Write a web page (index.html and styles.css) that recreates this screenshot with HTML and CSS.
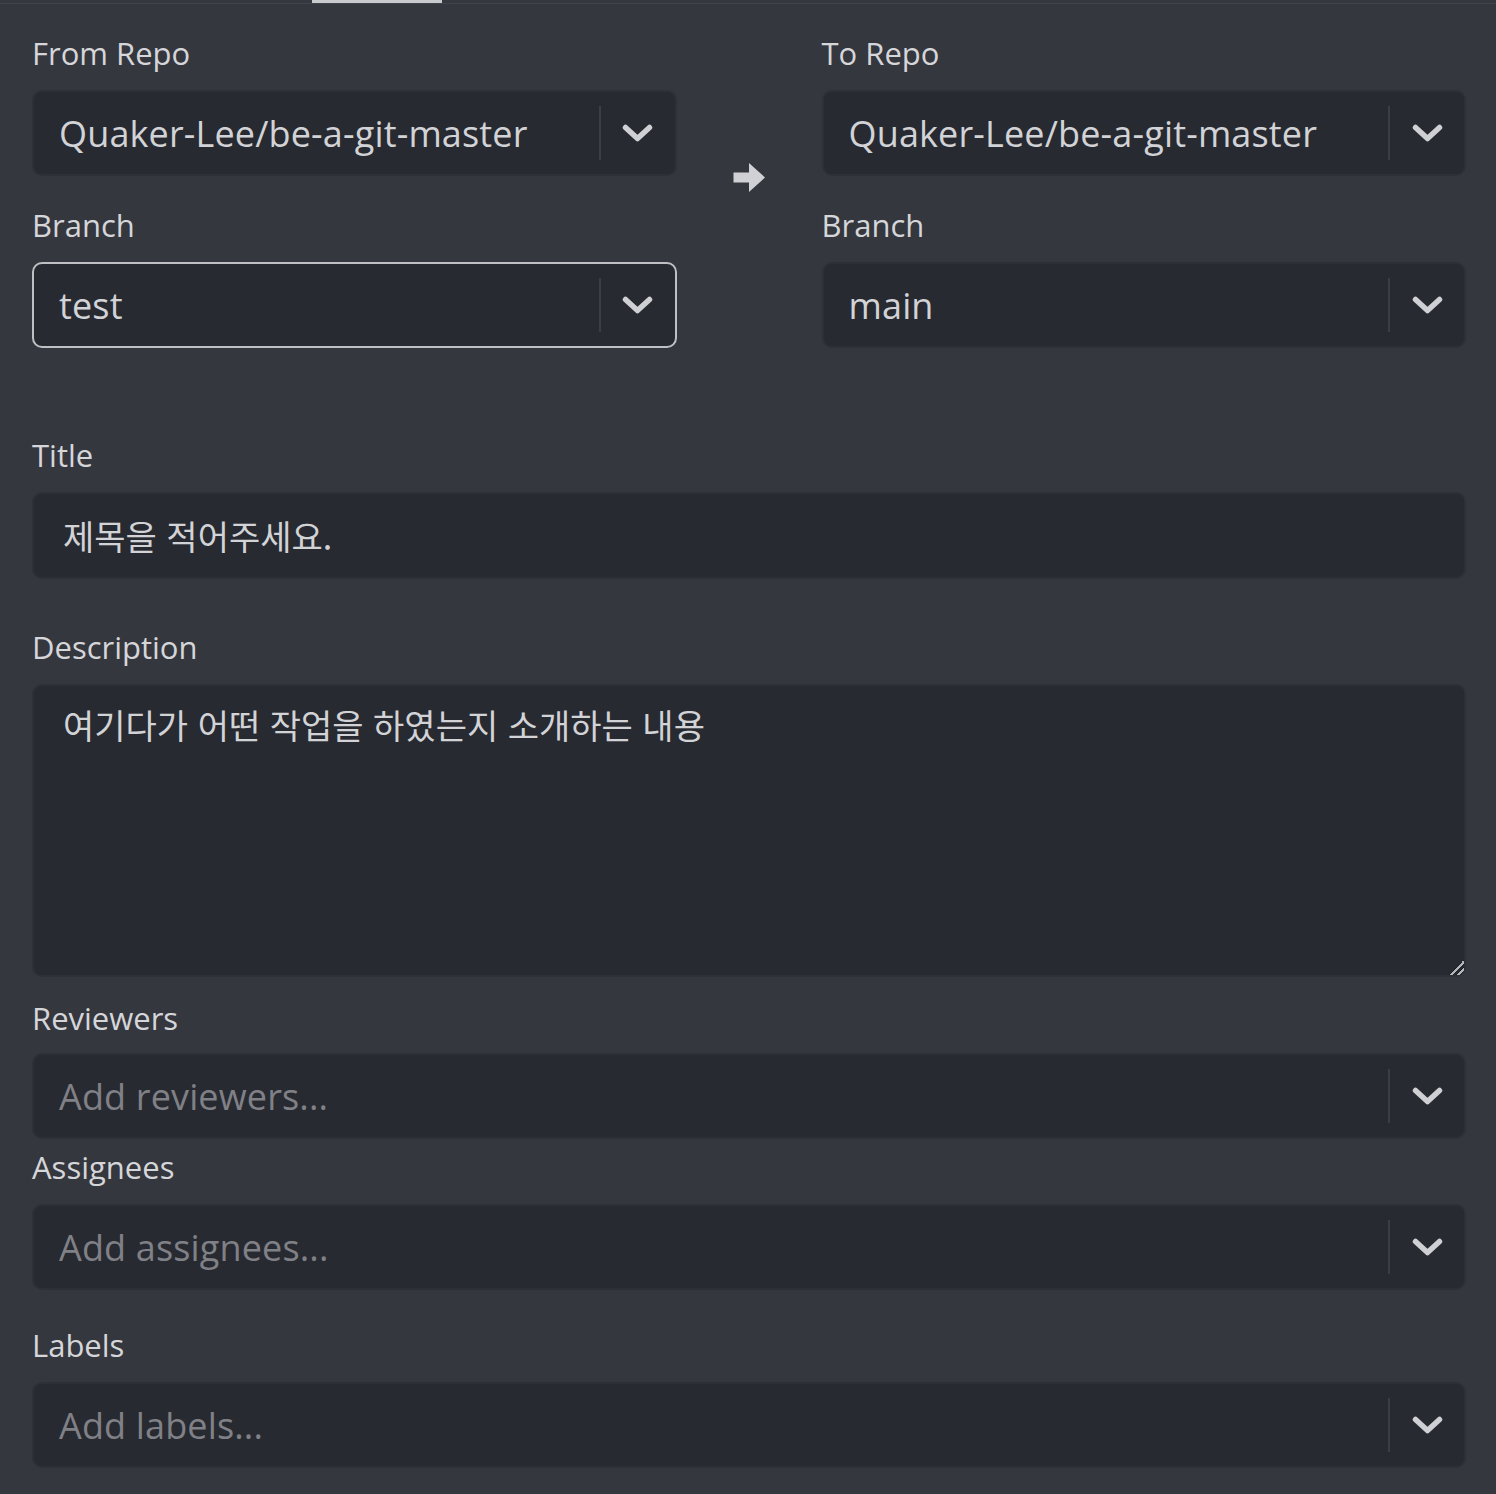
FILE: index.html
```html
<!DOCTYPE html>
<html lang="ko">
<head>
<meta charset="utf-8">
<title>Create Pull Request</title>
<link rel="stylesheet" href="styles.css">
</head>
<body>
<div class="tabbar"><div class="tab-indicator"></div></div>
<main class="form">
  <section class="repos">
    <div class="col">
      <label class="label">From Repo</label>
      <div class="select">
        <span class="value">Quaker-Lee/be-a-git-master</span>
        <span class="sep"></span>
        <span class="chev"><svg width="31" height="18" viewBox="0 0 31 18"><polyline points="3.5,3.5 15.5,14.5 27.5,3.5"/></svg></span>
      </div>
      <label class="label label-gap">Branch</label>
      <div class="select focused">
        <span class="value">test</span>
        <span class="sep"></span>
        <span class="chev"><svg width="31" height="18" viewBox="0 0 31 18"><polyline points="3.5,3.5 15.5,14.5 27.5,3.5"/></svg></span>
      </div>
    </div>
    <div class="mid">
      <svg class="arrow" width="32" height="29" viewBox="0 0 32 29"><polygon points="0.5,9.5 16,9.5 16,0 32,14.5 16,29 16,19.5 0.5,19.5"/></svg>
    </div>
    <div class="col">
      <label class="label">To Repo</label>
      <div class="select">
        <span class="value">Quaker-Lee/be-a-git-master</span>
        <span class="sep"></span>
        <span class="chev"><svg width="31" height="18" viewBox="0 0 31 18"><polyline points="3.5,3.5 15.5,14.5 27.5,3.5"/></svg></span>
      </div>
      <label class="label label-gap">Branch</label>
      <div class="select">
        <span class="value">main</span>
        <span class="sep"></span>
        <span class="chev"><svg width="31" height="18" viewBox="0 0 31 18"><polyline points="3.5,3.5 15.5,14.5 27.5,3.5"/></svg></span>
      </div>
    </div>
  </section>

  <label class="label title-label">Title</label>
  <input class="text-input" type="text" value="제목을 적어주세요.">

  <label class="label desc-label">Description</label>
  <textarea class="textarea">여기다가 어떤 작업을 하였는지 소개하는 내용</textarea>

  <label class="label rev-label">Reviewers</label>
  <div class="select">
    <span class="value placeholder">Add reviewers...</span>
    <span class="sep"></span>
    <span class="chev"><svg width="31" height="18" viewBox="0 0 31 18"><polyline points="3.5,3.5 15.5,14.5 27.5,3.5"/></svg></span>
  </div>

  <label class="label asg-label">Assignees</label>
  <div class="select">
    <span class="value placeholder">Add assignees...</span>
    <span class="sep"></span>
    <span class="chev"><svg width="31" height="18" viewBox="0 0 31 18"><polyline points="3.5,3.5 15.5,14.5 27.5,3.5"/></svg></span>
  </div>

  <label class="label lab-label">Labels</label>
  <div class="select">
    <span class="value placeholder">Add labels...</span>
    <span class="sep"></span>
    <span class="chev"><svg width="31" height="18" viewBox="0 0 31 18"><polyline points="3.5,3.5 15.5,14.5 27.5,3.5"/></svg></span>
  </div>
</main>
</body>
</html>
```

FILE: styles.css
```css
* { box-sizing: border-box; }

html, body {
  margin: 0;
  padding: 0;
  background: #35373f;
}

body {
  font-family: "Open Sans", "Noto Sans CJK KR", sans-serif;
  color: #d5d6d9;
  width: 1496px;
  height: 1494px;
  overflow: hidden;
}

.tabbar {
  height: 4px;
  border-bottom: 1px solid #41444c;
}

.tab-indicator {
  margin-left: 312px;
  width: 130px;
  height: 3px;
  background: #c9cacd;
}

.form {
  padding: 29px 30px 0 32px;
  display: flex;
  flex-direction: column;
}

.label {
  display: block;
  font-size: 31px;
  line-height: 40px;
  height: 40px;
  color: #d5d6d9;
  margin-bottom: 17px;
}

.repos {
  display: grid;
  grid-template-columns: 1fr 145px 1fr;
}

.col {
  display: flex;
  flex-direction: column;
}

.label-gap { margin-top: 29px; }

.mid {
  display: flex;
  justify-content: center;
  padding-top: 130px;
}

.arrow { fill: #d0d1d4; }

.select {
  height: 86px;
  background: #282a31;
  border: 2px solid #2e3037;
  border-radius: 10px;
  display: flex;
  align-items: center;
  padding-left: 25px;
}

.select.focused { border-color: #bfc0c3; }

.value {
  flex: 1;
  font-size: 36px;
  letter-spacing: 0.15px;
  color: #d2d3d6;
  white-space: nowrap;
  overflow: hidden;
}

.value.placeholder { color: #808187; }

.sep {
  width: 2px;
  height: 54px;
  background: #3c3e46;
}

.chev {
  width: 74px;
  display: flex;
  justify-content: center;
  align-items: center;
}

.chev svg polyline {
  fill: none;
  stroke: #cfd0d3;
  stroke-width: 5.5;
  stroke-linecap: round;
  stroke-linejoin: round;
}

.title-label { margin-top: 87px; }

.text-input {
  height: 87px;
  background: #282a31;
  border: 2px solid #2e3037;
  border-radius: 10px;
  padding: 0 28px 0 29px;
  font-family: "Noto Sans CJK KR", "Open Sans", sans-serif;
  font-size: 34px;
  color: #d2d3d6;
  outline: none;
}

.desc-label { margin-top: 48px; }

.textarea {
  height: 293px;
  background: #282a31;
  border: 2px solid #2e3037;
  border-radius: 10px;
  padding: 14px 28px 0 29px;
  font-family: "Noto Sans CJK KR", "Open Sans", sans-serif;
  font-size: 34px;
  line-height: 50px;
  color: #d2d3d6;
  outline: none;
  resize: vertical;
}

.textarea::-webkit-resizer {
  background: linear-gradient(135deg,
    transparent 0 48%,
    #1c1d22 48% 50%,
    #b4b5b8 50% 60%,
    #1c1d22 60% 62%,
    transparent 62% 72%,
    #1c1d22 72% 74%,
    #b4b5b8 74% 84%,
    #1c1d22 84% 86%,
    transparent 86%);
}

.rev-label { margin-top: 21px; margin-bottom: 15px; }
.asg-label { margin-top: 8px; margin-bottom: 17px; }
.lab-label { margin-top: 35px; margin-bottom: 17px; }
```
